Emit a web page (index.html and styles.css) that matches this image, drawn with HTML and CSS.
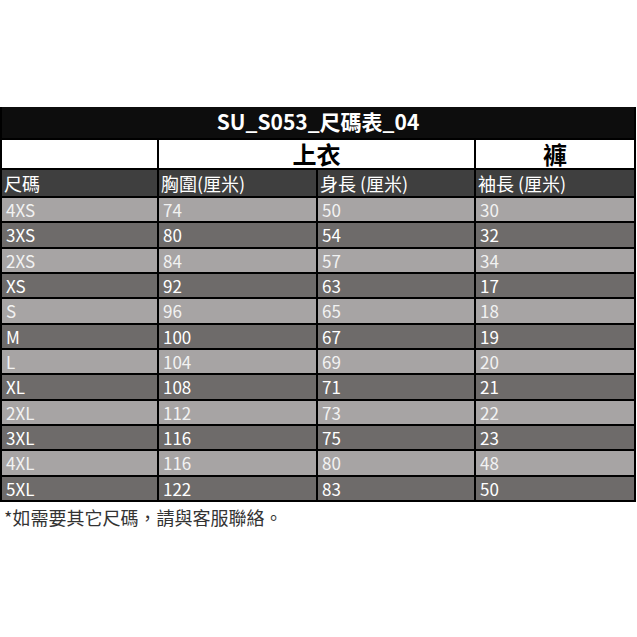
FILE: index.html
```html
<!DOCTYPE html>
<html lang="zh-Hant">
<head>
<meta charset="utf-8">
<link rel="stylesheet" href="styles.css">
</head>
<body>
<div class="page">
  <div class="sheet">
    <div class="title">SU_S053_尺碼表_04</div>
    <div class="h2 blank"></div>
    <div class="h2 span2">上衣</div>
    <div class="h2">褲</div>
    <div class="h3">尺碼</div>
    <div class="h3">胸圍(厘米)</div>
    <div class="h3">身長 (厘米)</div>
    <div class="h3">袖長 (厘米)</div>

    <div class="c l">4XS</div><div class="c l">74</div><div class="c l">50</div><div class="c l">30</div>
    <div class="c d">3XS</div><div class="c d">80</div><div class="c d">54</div><div class="c d">32</div>
    <div class="c l">2XS</div><div class="c l">84</div><div class="c l">57</div><div class="c l">34</div>
    <div class="c d">XS</div><div class="c d">92</div><div class="c d">63</div><div class="c d">17</div>
    <div class="c l">S</div><div class="c l">96</div><div class="c l">65</div><div class="c l">18</div>
    <div class="c d">M</div><div class="c d">100</div><div class="c d">67</div><div class="c d">19</div>
    <div class="c l">L</div><div class="c l">104</div><div class="c l">69</div><div class="c l">20</div>
    <div class="c d">XL</div><div class="c d">108</div><div class="c d">71</div><div class="c d">21</div>
    <div class="c l">2XL</div><div class="c l">112</div><div class="c l">73</div><div class="c l">22</div>
    <div class="c d">3XL</div><div class="c d">116</div><div class="c d">75</div><div class="c d">23</div>
    <div class="c l">4XL</div><div class="c l">116</div><div class="c l">80</div><div class="c l">48</div>
    <div class="c d">5XL</div><div class="c d">122</div><div class="c d">83</div><div class="c d">50</div>
  </div>
  <div class="note">*如需要其它尺碼，請與客服聯絡。</div>
</div>
</body>
</html>
```
FILE: styles.css
```css
html, body {
  margin: 0;
  padding: 0;
  background: #ffffff;
}
body {
  font-family: "Noto Sans CJK TC", "Noto Sans", sans-serif;
}
.page {
  padding-top: 107px;
  width: 637px;
}
.sheet {
  width: 636px;
  box-sizing: border-box;
  background: #000;
  padding: 2px;
  display: grid;
  grid-template-columns: 155px 157px 156px 158px;
  grid-template-rows: 29px 28px 26px repeat(12, 23.33px);
  column-gap: 2px;
  row-gap: 2px;
}
.title {
  grid-column: 1 / 5;
  background: #0d0d0d;
  color: #fff;
  font-weight: bold;
  font-size: 21px;
  line-height: 29px;
  text-align: center;
  margin: -2px 0 0;
}
.h2 {
  background: #fff;
  color: #000;
  font-weight: bold;
  font-size: 24px;
  line-height: 28px;
  text-align: center;
}
.span2 {
  grid-column: 2 / 4;
}
.h3 {
  background: #3f3f3f;
  color: #fff;
  font-size: 18px;
  line-height: 26px;
  padding-left: 2px;
  white-space: nowrap;
}
.c {
  font-size: 17px;
  line-height: 23.33px;
  padding-left: 4px;
  white-space: nowrap;
}
.l {
  background: #a7a4a4;
  color: #f2f2f2;
}
.d {
  background: #6e6b6a;
  color: #ffffff;
}
.note {
  padding: 3px 0 0 4px;
  font-size: 18px;
  line-height: 24px;
  color: #333;
}
```
